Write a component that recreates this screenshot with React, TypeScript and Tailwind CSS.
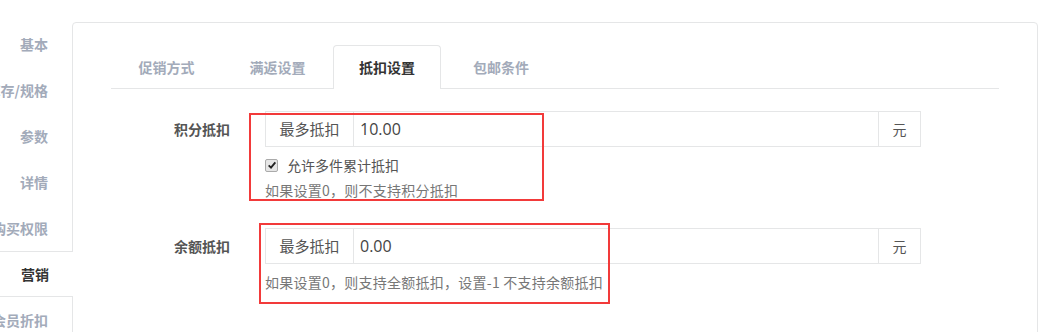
const font = { fontFamily: '"Noto Sans CJK SC", "Liberation Sans", sans-serif' };

const sideItems = ['基本', '库存/规格', '参数', '详情', '购买权限', '营销', '会员折扣'];
const tabs = ['促销方式', '满返设置', '抵扣设置', '包邮条件'];

function InputGroup({ value }: { value: string }) {
  return (
    <div className="flex h-[36px] w-[656px] border border-[#e5e6e7] text-[14px] text-[#555]">
      <div className="flex w-[88px] items-center justify-center border-r border-[#e5e6e7] text-[15px]">
        最多抵扣
      </div>
      <div className="flex flex-1 items-center pl-[6px] text-[16px] text-[#444]" style={{ fontFamily: '"Open Sans", "Noto Sans CJK SC", sans-serif' }}>
        {value}
      </div>
      <div className="flex w-[42px] items-center justify-center border-l border-[#e5e6e7]">元</div>
    </div>
  );
}

export default function App() {
  return (
    <div className="relative flex h-[332px] w-[1042px] items-start overflow-hidden bg-white pt-[21px]" style={font}>
      <div className="flex w-[72px] shrink-0 flex-col">
        {sideItems.map((s) => {
          const active = s === '营销';
          return (
            <div
              key={s}
              className={`relative flex h-[46px] shrink-0 items-center justify-end overflow-hidden whitespace-nowrap pr-[24px] text-[14px] font-bold ${
                active ? 'z-10 -mr-px border-y border-[#e5e6e7] bg-white text-[#333]' : 'text-[#a3abba]'
              }`}
            >
              {s}
            </div>
          );
        })}
      </div>

      <div className="mr-[4px] mt-[1px] h-[360px] flex-1 shrink-0 rounded-t-[4px] border border-[#e5e6e7] px-[38px] pt-[22px]">
        <div className="flex border-b border-[#e5e6e7]">
          {tabs.map((t, i) => {
            const active = t === '抵扣设置';
            return (
              <div
                key={t}
                className={`-mb-px flex h-[44px] shrink-0 items-center justify-center whitespace-nowrap text-[14px] font-bold ${
                  active
                    ? 'w-[108px] rounded-t-[4px] border border-b-0 border-[#e5e6e7] bg-white text-[#333]'
                    : i === 3
                      ? 'w-[120px] text-[#a3abba]'
                      : 'w-[111px] text-[#a3abba]'
                }`}
              >
                {t}
              </div>
            );
          })}
        </div>

        <div className="pt-[22px]">
          <div className="flex">
            <div className="flex h-[36px] w-[119px] items-center justify-end text-[14px] font-bold text-[#555]">积分抵扣</div>
            <div className="ml-[35px]">
              <InputGroup value="10.00" />
              <div className="mt-[8px] flex h-[20px] items-center text-[14px] text-[#555]">
                <span className="flex h-[13px] w-[13px] items-center justify-center rounded-[2px] border border-[#aaa] bg-[#e6e6e6]">
                  <svg viewBox="0 0 12 12" className="h-[10px] w-[10px]">
                    <path d="M2 6.5 L4.8 9.2 L10 2.8" fill="none" stroke="#222" strokeWidth="2.2" />
                  </svg>
                </span>
                <span className="ml-[9px]">允许多件累计抵扣</span>
              </div>
              <div className="mt-[5px] h-[20px] text-[14px] leading-[20px] tracking-[0.25px] text-[#777]">如果设置0，则不支持积分抵扣</div>
            </div>
          </div>

          <div className="mt-[28px] flex">
            <div className="flex h-[36px] w-[119px] items-center justify-end text-[14px] font-bold text-[#555]">余额抵扣</div>
            <div className="ml-[35px]">
              <InputGroup value="0.00" />
              <div className="mt-[8px] text-[14px] leading-[20px] tracking-[0.25px] text-[#777]">如果设置0，则支持全额抵扣，设置-1 不支持余额抵扣</div>
            </div>
          </div>
        </div>
      </div>

      <div className="absolute left-[249px] top-[113px] h-[88px] w-[295px] border-2 border-[#f23a3a]" />
      <div className="absolute left-[259px] top-[223px] h-[81px] w-[351px] border-2 border-[#f23a3a]" />
    </div>
  );
}
